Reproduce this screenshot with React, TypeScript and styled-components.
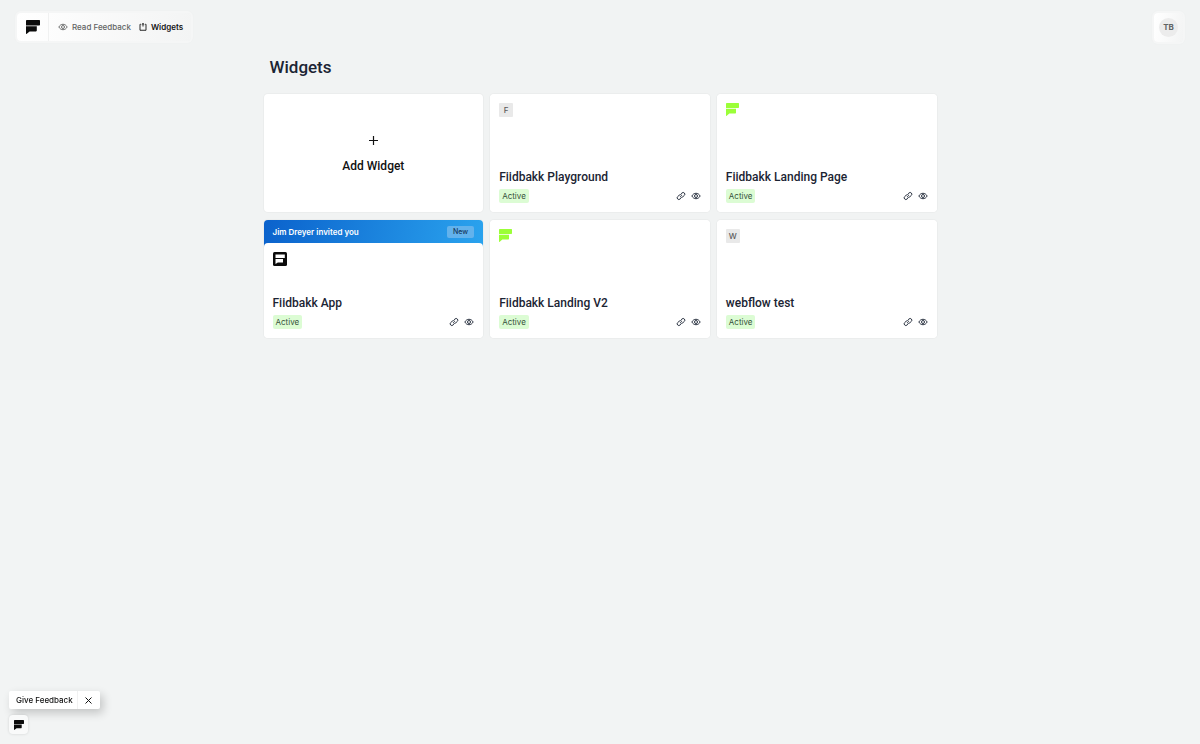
import React from "react";
import styled, { createGlobalStyle, css } from "styled-components";

const GlobalStyle = createGlobalStyle`
  *, *::before, *::after { box-sizing: border-box; }
  body {
    margin: 0;
    background: #f2f4f4;
    color: #1b2433;
    font-family: Inter, "Liberation Sans", sans-serif;
    font-size: 8px;
    line-height: 12px;
  }
  button { font: inherit; color: inherit; border: 0; padding: 0; background: none; cursor: pointer; }
  a { color: inherit; text-decoration: none; }
  svg { display: block; flex: none; }
`;

const displayFont = css`
  font-family: Roboto, "Liberation Sans", sans-serif;
  font-weight: 500;
`;

const panel = css`
  background: linear-gradient(100deg, #ffffff, #f3f4f4);
  border-radius: 4px;
  box-shadow: 0 0 0 2px #f5f6f6, 0 0 3px 2px rgba(0, 0, 0, 0.02);
`;

const Top = styled.div`
  background: #f1f3f3;
  padding-bottom: 42px;
`;

const Header = styled.header`
  display: flex;
  align-items: flex-start;
  justify-content: space-between;
  padding: 13px 17px 0;
`;

const NavBar = styled.nav`
  ${panel}
  display: flex;
  align-items: center;
  height: 28px;
  padding-right: 8px;
`;

const HomeLink = styled.a`
  display: flex;
  align-items: center;
  justify-content: center;
  width: 32px;
  height: 28px;
  border-right: 1px solid #f0f1f1;
`;

const NavLinks = styled.div`
  display: flex;
  gap: 8px;
  padding-left: 9px;
`;

const NavLink = styled.a<{ $active?: boolean }>`
  display: flex;
  align-items: center;
  gap: 4px;
  color: ${(p) => (p.$active ? "#111111" : "#626464")};
  font-weight: ${(p) => (p.$active ? 600 : 500)};
`;

const Profile = styled.button`
  && { ${panel} }
  display: flex;
  align-items: center;
  justify-content: center;
  width: 29px;
  height: 29px;
`;

const Initials = styled.span`
  width: 19px;
  height: 19px;
  border-radius: 50%;
  background: #ececec;
  color: #626464;
  font-weight: 700;
  line-height: 19px;
`;

const Main = styled.main`
  max-width: 673px;
  margin: 0 auto;
`;

const Title = styled.h1`
  ${displayFont}
  margin: 0;
  padding: 13px 6px 14px;
  font-size: 17px;
  line-height: 25px;
`;

const Grid = styled.div`
  display: grid;
  grid-template-columns: repeat(auto-fill, minmax(200px, 1fr));
  grid-auto-rows: 118px;
  gap: 8px 7px;
`;

const cardFrame = css`
  border-radius: 4px;
  box-shadow: 0 0 0 1px #ebeded;
  overflow: hidden;
`;

const AddCard = styled.button`
  ${cardFrame}
  && {
    ${displayFont}
    padding-top: 4px;
    background: #ffffff;
    color: #111111;
    font-size: 12px;
    line-height: 18px;
  }
  display: flex;
  flex-direction: column;
  align-items: center;
  justify-content: center;
  gap: 12px;
`;

const Card = styled.article<{ $invited?: boolean }>`
  ${cardFrame}
  display: flex;
  flex-direction: column;
  background: ${(p) =>
    p.$invited ? "linear-gradient(100deg, #0b62cc, #2aa3ee) top / 100% 28px no-repeat #ffffff" : "#ffffff"};
`;

const Invite = styled.div`
  display: flex;
  align-items: center;
  justify-content: space-between;
  height: 23px;
  padding: 0 9px;
  color: #ffffff;
  font-weight: 600;
`;

const NewTag = styled.span`
  padding: 0 6px;
  border-radius: 2px;
  background: #62b2ec;
  color: #15385c;
  font-size: 7px;
  font-weight: 500;
`;

const CardBody = styled.div`
  display: flex;
  flex: 1;
  flex-direction: column;
  justify-content: space-between;
  padding: 9px;
  border-radius: 4px;
  background: #ffffff;
`;

const CardName = styled.h2`
  ${displayFont}
  margin: 0 0 4px;
  font-size: 12px;
  line-height: 16px;
`;

const CardFooter = styled.div`
  display: flex;
  align-items: center;
  justify-content: space-between;
`;

const Status = styled.span`
  padding: 1px 3px;
  border-radius: 2px;
  background: #dcfcd4;
  color: #35513a;
`;

const Actions = styled.div`
  display: flex;
  gap: 5px;
`;

const Letter = styled.span`
  width: 14px;
  height: 14px;
  border-radius: 1px;
  background: #e9e9e9;
  color: #5c5c5c;
  font-weight: 500;
  line-height: 14px;
  text-align: center;
`;

const Dock = styled.aside`
  position: fixed;
  left: 9px;
  bottom: 10px;
  display: flex;
  flex-direction: column;
  align-items: flex-start;
  gap: 6px;
`;

const FeedbackBar = styled.div`
  display: flex;
  height: 18px;
  border-radius: 2px;
  background: #ffffff;
  box-shadow: 3px 4px 10px rgba(0, 0, 0, 0.2);
  color: #111111;
`;

const GiveFeedback = styled.button`
  && {
    padding: 0 4px 0 7px;
    font-weight: 500;
  }
`;

const CloseButton = styled.button`
  display: flex;
  align-items: center;
  justify-content: center;
  width: 23px;
  && { border-left: 1px solid #f1f1f1; }
`;

const Launcher = styled.button`
  display: flex;
  align-items: center;
  justify-content: center;
  width: 19px;
  height: 19px;
  border-radius: 4px;
  && { background: #f9fafa; }
  box-shadow: 0 0 3px rgba(0, 0, 0, 0.14);
`;

function Logo({ width, color }: { width: number; color: string }) {
  return (
    <svg width={width} height={width} viewBox="0 0 14 14" fill={color} aria-hidden="true">
      <path d="M.7 0h12.7q.6 0 .6.6v4.1q0 .8-.8.8H0V.7Q0 0 .7 0Z" />
      <path d="M0 6.3h10.8v4.3q0 .8-.8.8H3.6L.8 13.7Q0 14.2 0 13.4Z" />
    </svg>
  );
}

function AppLogo() {
  return (
    <svg width="14" height="14" viewBox="0 0 14 14" aria-hidden="true">
      <rect width="14" height="14" rx="1.5" fill="#0b0b0b" />
      <path d="M2.500 2.500h9.300v3.600H2.500Z M2.500 7h7.500v3.400H4.800l-2.300 1.600Z" fill="#ffffff" />
    </svg>
  );
}

function EyeIcon() {
  return (
    <svg width="10" height="10" viewBox="0 0 24 24" fill="none" stroke="currentColor" strokeWidth="2.2" aria-hidden="true">
      <path d="M2 12C4.500 7.500 8 5.500 12 5.500S19.500 7.500 22 12C19.500 16.500 16 18.500 12 18.500S4.500 16.500 2 12Z" />
      <circle cx="12" cy="12" r="3.600" />
    </svg>
  );
}

function LinkIcon() {
  return (
    <svg width="10" height="10" viewBox="0 0 24 24" fill="none" stroke="currentColor" strokeWidth="2.2" strokeLinecap="round" aria-hidden="true">
      <path d="M10 13.500a4.300 4.300 0 0 0 6.500.4l3.500-3.400a4 4 0 0 0-5.700-5.700L12.500 6.500" />
      <path d="M14 10.500a4.300 4.300 0 0 0-6.500-.4L4 13.500a4 4 0 0 0 5.700 5.700l1.800-1.700" />
    </svg>
  );
}

function WidgetIcon() {
  return (
    <svg width="8" height="8" viewBox="0 0 16 16" fill="none" stroke="currentColor" strokeWidth="1.800" aria-hidden="true">
      <path d="M3.500 2.500H2v12h12v-12h-1.500M8 1v6M5.500 3 8 1l2.500 2" />
    </svg>
  );
}

function CrossIcon() {
  return (
    <svg width="7" height="7" viewBox="0 0 7 7" stroke="currentColor" aria-hidden="true">
      <path d="M.5.5l6 6M6.500.5l-6 6" />
    </svg>
  );
}

function PlusIcon() {
  return (
    <svg width="9" height="9" viewBox="0 0 9 9" stroke="currentColor" strokeWidth="1.2" aria-hidden="true">
      <path d="M4.500 0v9M0 4.500h9" />
    </svg>
  );
}

type Widget = { name: string; icon: React.ReactNode; invitedBy?: string };

const widgets: Widget[] = [
  { name: "Fiidbakk Playground", icon: <Letter>F</Letter> },
  { name: "Fiidbakk Landing Page", icon: <Logo width={13} color="#9bff38" /> },
  { name: "Fiidbakk App", icon: <AppLogo />, invitedBy: "Jim Dreyer" },
  { name: "Fiidbakk Landing V2", icon: <Logo width={13} color="#9bff38" /> },
  { name: "webflow test", icon: <Letter>W</Letter> },
];

function WidgetCard({ name, icon, invitedBy }: Widget) {
  return (
    <Card $invited={Boolean(invitedBy)}>
      {invitedBy && (
        <Invite>
          {invitedBy} invited you
          <NewTag>New</NewTag>
        </Invite>
      )}
      <CardBody>
        {icon}
        <div>
          <CardName>{name}</CardName>
          <CardFooter>
            <Status>Active</Status>
            <Actions>
              <button type="button" aria-label={`Copy link to ${name}`}><LinkIcon /></button>
              <button type="button" aria-label={`View ${name}`}><EyeIcon /></button>
            </Actions>
          </CardFooter>
        </div>
      </CardBody>
    </Card>
  );
}

export default function App() {
  return (
    <>
      <GlobalStyle />
      <Top>
        <Header>
          <NavBar aria-label="Main">
            <HomeLink href="#home" aria-label="Fiidbakk home"><Logo width={14} color="#0b0b0b" /></HomeLink>
            <NavLinks>
              <NavLink href="#feedback"><EyeIcon />Read Feedback</NavLink>
              <NavLink href="#widgets" $active aria-current="page"><WidgetIcon />Widgets</NavLink>
            </NavLinks>
          </NavBar>
          <Profile type="button" aria-label="Account"><Initials>TB</Initials></Profile>
        </Header>
        <Main>
          <Title>Widgets</Title>
          <Grid>
            <AddCard type="button"><PlusIcon />Add Widget</AddCard>
            {widgets.map((w) => <WidgetCard key={w.name} {...w} />)}
          </Grid>
        </Main>
      </Top>
      <Dock aria-label="Feedback">
        <FeedbackBar>
          <GiveFeedback type="button">Give Feedback</GiveFeedback>
          <CloseButton type="button" aria-label="Close"><CrossIcon /></CloseButton>
        </FeedbackBar>
        <Launcher type="button" aria-label="Open feedback"><Logo width={10} color="#0b0b0b" /></Launcher>
      </Dock>
    </>
  );
}
